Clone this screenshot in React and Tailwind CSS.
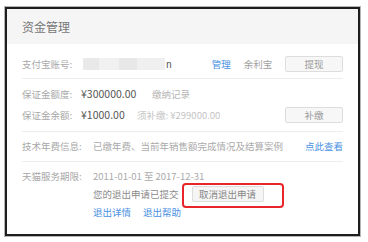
export default function App() {
  const font = { fontFamily: '"Noto Sans CJK SC", "Liberation Sans", sans-serif' };

  return (
    <div className="w-[368px] h-[242px] bg-white pt-[7px] pl-[5px]" style={font}>
      {/* FRAME */}
      <div className="w-[355px] h-[229px] border-2 border-[#1e1e1e] shadow-[0_0_0_1px_#b5b5b5] bg-white">
        {/* HEADER */}
        <div className="h-[35px] bg-[#f5f5f5] pl-[15px] flex items-center text-[12px] text-[#777]">
          资金管理
        </div>

        <div className="pl-[15px] pr-[15px] text-[9.5px] text-[#a8a8a8]">
          {/* ALIPAY */}
          <div className="h-[35px] flex items-end pb-[5px] border-b border-[#ededed]">
            <div className="h-[18px] flex items-center w-full">
              <span className="w-[61px]">支付宝账号:</span>
              <span className="w-[82px] h-[12px] bg-[#efefef] flex">
                <span className="w-[16px] bg-[#e9e9e9]" />
                <span className="w-[20px] bg-[#f1f1f1]" />
                <span className="w-[18px] bg-[#e8e8e8]" />
                <span className="w-[28px] bg-[#f0f0f0]" />
              </span>
              <span className="text-[#555] ml-px">n</span>
              <span className="ml-[40px] text-[#4a90e2]">管理</span>
              <span className="ml-[13px] text-[#a0a0a0]">余利宝</span>
              <button className="ml-auto w-[58px] h-[16px] border border-[#dddddd] rounded-[2px] bg-[#f7f7f7] text-[#999] text-[9.5px]">
                提现
              </button>
            </div>
          </div>

          {/* DEPOSIT */}
          <div className="pt-[5px] pb-[5px] border-b border-[#ededed]">
            <div className="h-[20px] flex items-center">
              <span className="w-[59px]">保证金额度:</span>
              <span className="text-[#555] text-[10.5px] w-[71px]">¥300000.00</span>
              <span className="text-[#b5b5b5]">缴纳记录</span>
            </div>
            <div className="h-[22px] flex items-center">
              <span className="w-[59px]">保证金余额:</span>
              <span className="text-[#555] text-[10.5px] w-[56px]">¥1000.00</span>
              <span className="text-[#c4c4c4]">须补缴: ¥299000.00</span>
              <button className="ml-auto w-[58px] h-[16px] border border-[#dddddd] rounded-[2px] bg-[#f7f7f7] text-[#999] text-[9.5px]">
                补缴
              </button>
            </div>
          </div>

          {/* TECH FEE */}
          <div className="h-[30px] flex items-center border-b border-[#ededed]">
            <span className="w-[71px]">技术年费信息:</span>
            <span className="text-[#aaa]">已缴年费、当前年销售额完成情况及结算案例</span>
            <span className="ml-auto text-[#4a90e2]">点此查看</span>
          </div>

          {/* SERVICE */}
          <div className="pt-[6px] flex">
            <span className="w-[71px] h-[16px] flex items-center">天猫服务期限:</span>
            <div className="flex flex-col">
              <div className="h-[16px] flex items-center text-[#aaa]">2011-01-01 至 2017-12-31</div>
              <div className="h-[20px] flex items-center text-[#8a8a8a]">
                <span>您的退出申请已提交</span>
                <span className="relative ml-[13px]">
                  <button className="w-[72px] h-[16px] border border-[#dddddd] rounded-[2px] bg-[#f5f5f5] text-[#888] text-[9.5px]">
                    取消退出申请
                  </button>
                  <span className="absolute -left-[10px] -top-[3px] -right-[20px] -bottom-[6px] border-2 border-[#e8262a] rounded-[4px]" />
                </span>
              </div>
              <div className="h-[16px] flex items-center text-[#4a90e2]">
                <span>退出详情</span>
                <span className="ml-[12px]">退出帮助</span>
              </div>
            </div>
          </div>
        </div>
      </div>
    </div>
  );
}
